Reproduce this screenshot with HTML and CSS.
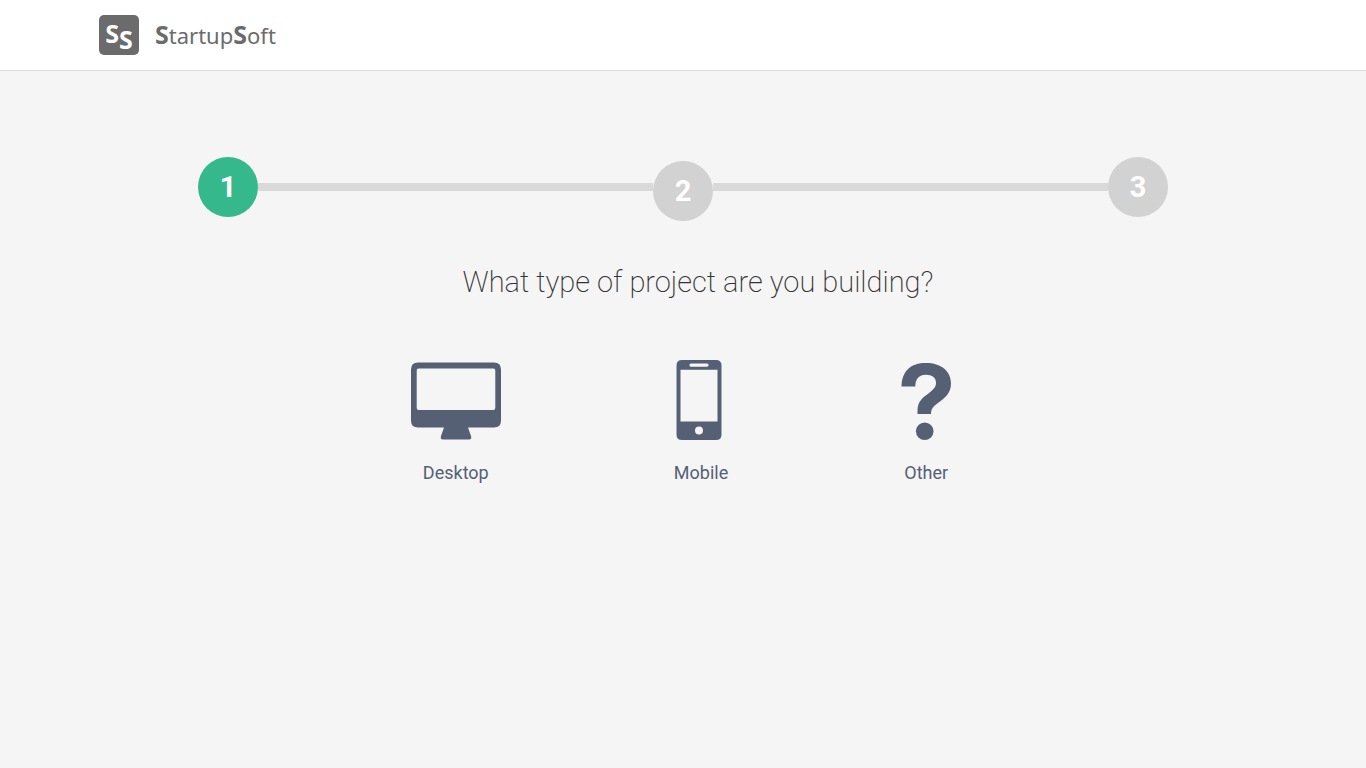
FILE: index.html
```html
<!DOCTYPE html>
<html lang="en">
<head>
<meta charset="utf-8">
<meta name="viewport" content="width=device-width, initial-scale=1">
<title>StartupSoft</title>
<link rel="stylesheet" href="styles.css">
</head>
<body>
<header class="header">
  <a class="brand" href="#">
    <span class="brand-mark" aria-hidden="true"><span class="mark-high">S</span><span class="mark-low">S</span></span>
    <span class="brand-name"><b class="brand-cap">S</b>tartup<b class="brand-cap">S</b>oft</span>
  </a>
</header>
<main class="main">
  <ol class="steps">
    <li class="step step-active" aria-current="step">1</li>
    <li class="line" aria-hidden="true"></li>
    <li class="step step-middle">2</li>
    <li class="line" aria-hidden="true"></li>
    <li class="step">3</li>
  </ol>
  <h1 class="question">What type of project are you building?</h1>
  <div class="options">
    <button class="option" type="button">
      <svg class="icon" width="90" height="80" viewBox="0 0 90 80" aria-hidden="true">
        <path fill-rule="evenodd" d="M7 2.500H83Q90 2.500 90 9.500V60.500Q90 67.500 83 67.500H57L60 76Q61 79.500 58 79.500H32Q29 79.500 30 76L33 67.500H7Q0 67.500 0 60.500V9.500Q0 2.500 7 2.500ZM7.500 8.500Q5.700 8.500 5.700 10.500V48Q5.700 50 7.500 50H82.500Q84.300 50 84.300 48V10.500Q84.300 8.500 82.500 8.500Z"/>
      </svg>
      <span class="label">Desktop</span>
    </button>
    <button class="option" type="button">
      <svg class="icon" width="50" height="80" viewBox="0 0 50 80" aria-hidden="true">
        <path fill-rule="evenodd" d="M6 0H40Q45.500 0 45.500 5.500V74.500Q45.500 80 40 80H6Q0.500 80 0.500 74.500V5.500Q0.500 0 6 0ZM4.500 9.800V61.500H41.500V9.800ZM15 3.500a1.600 1.600 0 0 0 0 3.200H31a1.600 1.600 0 0 0 0-3.200ZM23 66.500a4 4 0 1 0 0 8a4 4 0 1 0 0-8Z"/>
      </svg>
      <span class="label">Mobile</span>
    </button>
    <button class="option" type="button">
      <svg class="icon" width="50" height="80" viewBox="0 0 50 80" aria-hidden="true">
        <path d="M0.500 26.500C1 11 9.500 3 25 3C40 3 50 11 50 23.500C50 34 43 38.500 37 43C32 46.500 30 49 30 54H16.500V51C16.500 41 22 37.500 28 33C32.500 29.500 35 27 35 23C35 17.500 31 14.800 25 14.800C18 14.800 14.300 19 14.300 26.500Z"/>
        <circle cx="23.700" cy="71.200" r="8.800"/>
      </svg>
      <span class="label">Other</span>
    </button>
  </div>
</main>
</body>
</html>
```
FILE: styles.css
```css
* { box-sizing: border-box; }
body {
  margin: 0;
  min-height: 100vh;
  background: #f5f5f5;
  color: #333;
  font-family: Roboto, "Liberation Sans", sans-serif;
}
.header {
  padding: 15px 99px;
  background: #fff;
  border-bottom: 1px solid #dadada;
}
.brand {
  display: inline-flex;
  align-items: center;
  gap: 16px;
  vertical-align: top;
  color: #6b6b6b;
  font-family: "Noto Sans", sans-serif;
  text-decoration: none;
}
.brand-mark {
  display: flex;
  justify-content: center;
  width: 40px;
  height: 40px;
  border-radius: 5px;
  background: #6b6b6b;
  color: #fff;
  font-size: 25px;
  font-weight: 700;
  line-height: 36px;
}
.mark-low { padding-top: 6px; }
.brand-name {
  font-size: 22px;
  line-height: 38px;
}
.brand-cap {
  font-size: 25px;
  line-height: 1;
}
.main {
  max-width: 970px;
  margin: 0 auto;
  padding-top: 82px;
}
.steps {
  display: flex;
  align-items: center;
  margin: 0;
  padding: 0;
  list-style: none;
}
.step {
  width: 60px;
  height: 60px;
  border-radius: 50%;
  background: #d2d2d2;
  color: #fff;
  font-size: 29px;
  font-weight: 700;
  line-height: 60px;
  text-align: center;
}
.step-active { background: #36b88d; }
.step-middle { margin: 8px 0 0; }
.line {
  flex: 1;
  height: 8px;
  background: #d9d9d9;
}
.question {
  margin: 0;
  padding: 40px 0 0 30px;
  font-size: 29px;
  font-weight: 200;
  line-height: 42px;
  text-align: center;
}
.options {
  display: flex;
  justify-content: center;
  gap: 173px;
  padding: 57px 4px 0 0;
}
.option {
  display: flex;
  flex-direction: column;
  align-items: center;
  gap: 20px;
  padding: 0;
  border: 0;
  background: none;
  color: #556075;
  font-family: inherit;
  font-size: 18px;
  line-height: 26px;
  cursor: pointer;
}
.icon {
  fill: #556075;
  overflow: visible;
}
```
